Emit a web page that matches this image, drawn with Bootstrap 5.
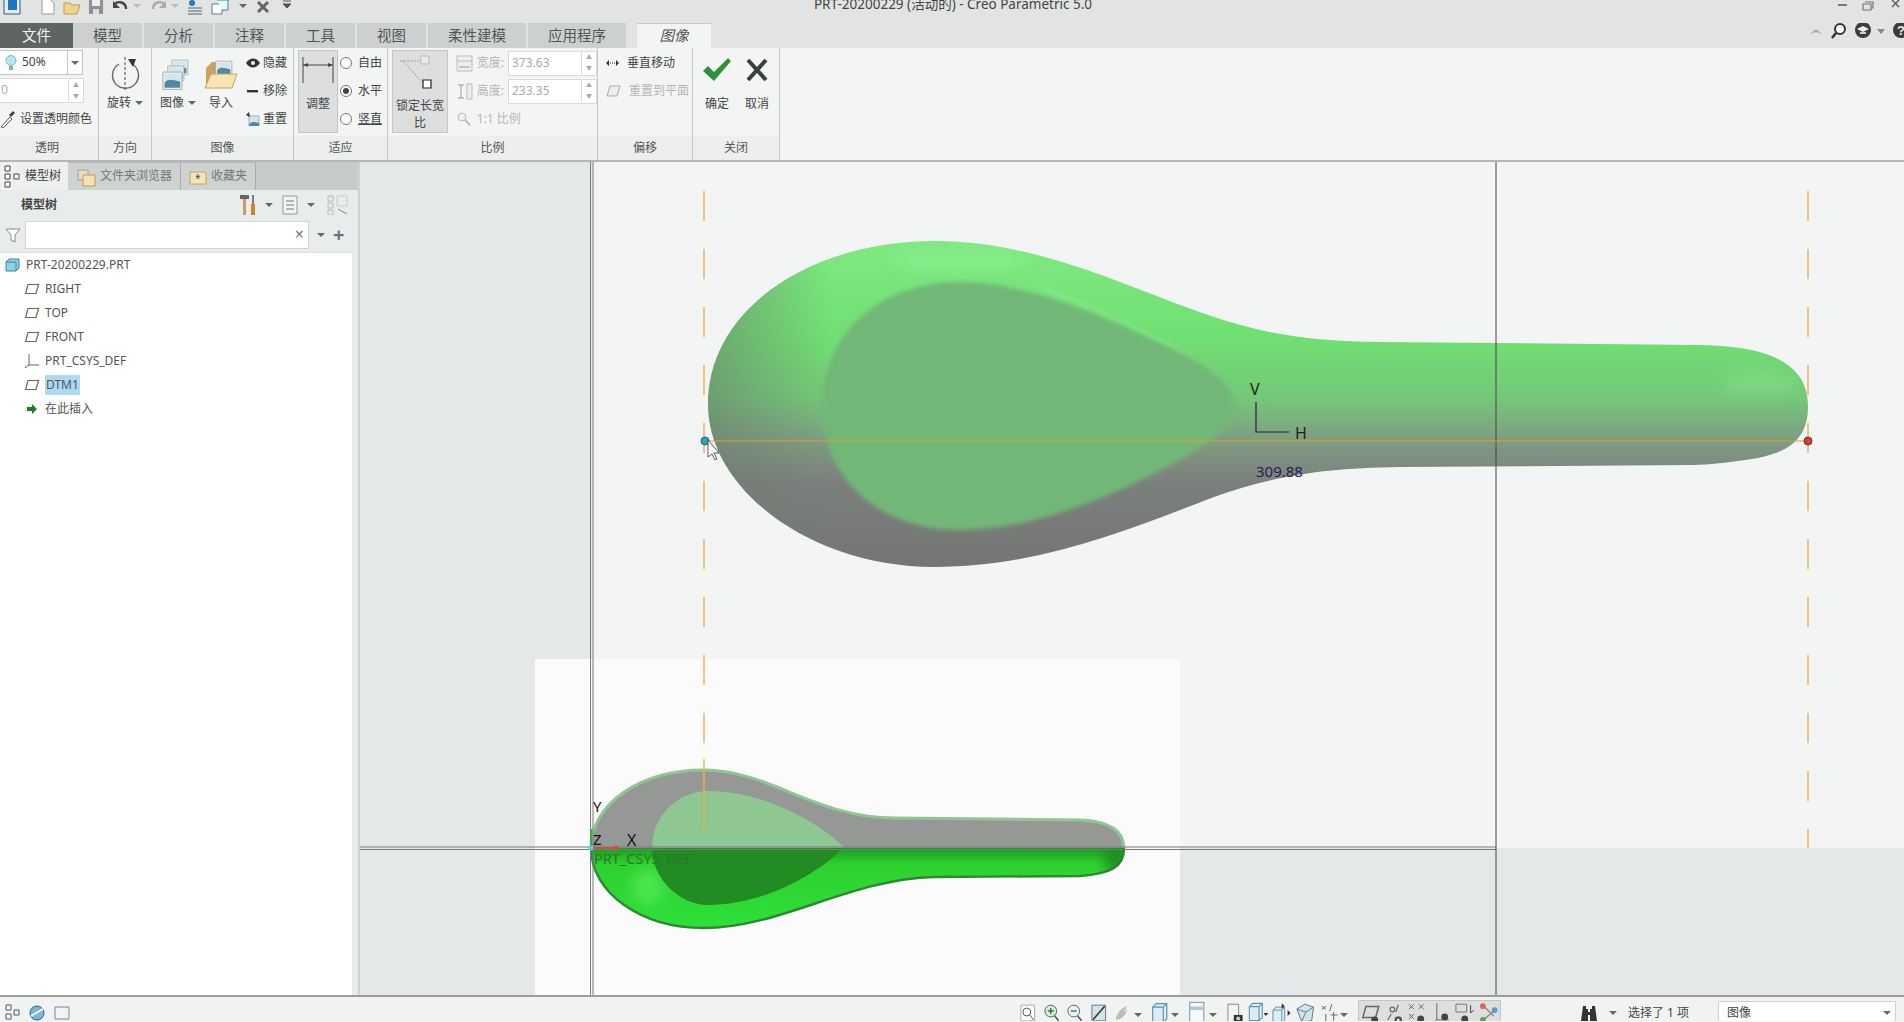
<!DOCTYPE html>
<html lang="zh-CN">
<head>
  <meta charset="UTF-8">
  <meta name="viewport" content="width=device-width, initial-scale=1">
  <title>PRT-20200229 (活动的) - Creo Parametric 5.0</title>
  <link href="https://cdn.jsdelivr.net/npm/bootstrap@5.3.0/dist/css/bootstrap.min.css" rel="stylesheet">
  <style>
    html, body { height: 100%; overflow: hidden; }
    body { font-family: "Noto Sans", "Noto Sans CJK SC", sans-serif; font-size: 12px; color: #444; background: #f3f5f4; line-height: 1.2; }
    .app-shell { width: 1904px; height: 1022px; overflow: hidden; }

    /* title bar */
    .title-bar { height: 23px; background: #e1e4e2; overflow: hidden; }
    .quick-tools { padding-left: 3px; height: 15px; }
    .quick-tools svg { display: block; margin-top: -7px; flex: none; }
    .q-new { margin-left: 16px; } .q-next { margin-left: 6px; } .q-car { margin-left: 1px; } .q-list { margin-left: 4px; }
    .q-win { margin-left: 7px; } .q-end { margin-left: 8px; }
    .title-text { left: 0; right: 0; top: -4px; text-align: center; font-size: 13.5px; color: #444; padding-left: 2px; }
    .win-btns { right: 0; top: 0; }

    /* tabs */
    .tab-bar { height: 25px; background: #e1e4e2; }
    .rtab { height: 25px; background: #ccd1d0; border-right: 2px solid #dfe2e1; font-size: 14.5px; color: #555; }
    .rtab-file { width: 73px; background: #5f6562; color: #f2f2f2; border: 0; }
    .rtab-m { width: 71px; }
    .rtab-w { width: 100px; }
    .rtab-active { width: 74px; margin-left: 9px; background: #f3f5f4; border: 0; border-top: 1px solid #c4c8c6; font-style: italic; }
    .help-icons { right: 0; top: 0; }

    /* ribbon */
    .ribbon { height: 114px; background: #f3f5f4; border-bottom: 2px solid #b3b6b5; }
    .rib-group { border-right: 1px solid #c6c9c8; }
    .rg-body { height: 88px; }
    .rg-label { height: 24px; background: #ecefee; font-size: 12px; color: #555; }
    .w-alpha { width: 99px; } .w-dir { width: 53px; } .w-img { width: 142px; } .w-fit { width: 94px; }
    .w-scale { width: 210px; } .w-off { width: 95px; } .w-close { width: 87px; }

    .combo-box { width: 83px; height: 25px; margin-top: 2px; background: #fff; border: 1px solid #c3c6c5; border-left: 0; padding-left: 4px; }
    .combo-arrow { width: 15px; border-left: 1px solid #c3c6c5; }
    .caret-d { display: inline-block; width: 0; height: 0; border-left: 4px solid transparent; border-right: 4px solid transparent; border-top: 4px solid #666; }
    .spin-box { background: #fff; border: 1px solid #dadcdb; height: 25px; color: #aaa; }
    .spin-arrows { width: 15px; border-left: 1px solid #dadcdb; font-size: 6px; line-height: 11px; text-align: center; color: #aaa; }
    .alpha-spin { width: 84px; margin-top: 3px; border-left: 0; padding-left: 1px; }
    .alpha-pick { margin-top: 2px; }
    .rib-line { height: 28px; white-space: nowrap; }
    .rib-stack { padding-top: 1px; }
    .rib-col { font-size: 12px; }
    .icon-gap { gap: 3px; }
    .press-btn { background: #dcdfde; border: 1px solid #c3c6c5; height: 83px; margin-top: 2px; }
    .fit-btn { width: 40px; margin-left: 4px; }
    .fit-cap { margin-top: 12px; }
    .lock-btn { width: 56px; margin-left: 4px; text-align: center; line-height: 17px; }
    .radio-stack { margin-left: 2px; }
    .radio-line { gap: 6px; }
    .radio-dot { width: 12px; height: 12px; border: 1px solid #777; border-radius: 50%; background: #fff; display: inline-block; position: relative; }
    .radio-on::after { content: ""; position: absolute; left: 2px; top: 2px; width: 6px; height: 6px; border-radius: 50%; background: #444; }
    .muted-txt { color: #b4b7b6; }
    .scale-spin { width: 89px; padding-left: 3px; font-size: 12px; }
    .close-col { width: 40px; }
    .close-cap { margin-top: 13px; }

    /* side panel */
    .main-area { height: 833px; }
    .side-panel { width: 360px; background: #e9ecec; border-right: 2px solid #cfd2d2; }
    .ptabs { height: 28px; background: #c6cbca; }
    .ptab { height: 28px; border-right: 1px solid #a9adac; border-top: 1px solid #b5b9b8; color: #777; gap: 4px; padding-left: 8px; background: #ced2d1; }
    .ptab-on { width: 68px; background: #eef0f0; color: #444; border: 0; padding-left: 3px; }
    .ptab-2 { width: 113px; }
    .ptab-3 { width: 75px; }
    .ptabs-fill { background: #c6cbca; }
    .tree-tools { height: 30px; padding-left: 21px; padding-right: 9px; }
    .filter-row { height: 29px; padding-left: 5px; }
    .filter-input { width: 284px; height: 28px; margin-left: 4px; background: #fff; border: 1px solid #d2d5d4; font-size: 16px; }
    .model-tree { width: 352px; height: 743px; margin-top: 3px; background: #fff; border-top: 1px solid #dfe2e1; padding-top: 0; }
    .tree-row { height: 24px; font-size: 12px; color: #555; }
    .tree-root { padding-left: 5px; gap: 6px; }
    .tree-child { padding-left: 24px; gap: 5px; }
    .tree-sel { background: #aed9f2; padding: 3px 1px; }

    /* canvas */
    .view-svg { display: block; }
    .view-svg text { font-family: "Noto Sans", sans-serif; }

    /* status bar */
    .status-bar { height: 26px; background: #f1f3f2; border-top: 2px solid #9a9d9c; padding-top: 8px; overflow: hidden; }
    .s-icon { width: 23.5px; height: 24px; flex: none; }
    .s-caret { width: 14px; flex: none; }
    .s-pressed { background: #dcdfde; border: 1px solid #c3c6c5; }
    .status-left { width: 1016px; padding-left: 4px; gap: 4px; }
    .status-right { padding-right: 8px; }
    .status-combo { width: 178px; height: 24px; background: #fff; border: 1px solid #cfd2d1; margin-left: 29px; padding-left: 8px; }
    .binoc-gap { margin-right: 10px; }
    .binoc-caret { margin-right: 11px; }
  </style>
</head>
<body>
<svg width="0" height="0" class="position-absolute">
  <defs>
    <symbol id="plane" viewBox="0 0 16 12"><path d="M4 1.5h10.5L12 10.5H1.5z" fill="none" stroke="#6b6655" stroke-width="1.2"/></symbol>
    <symbol id="page" viewBox="0 0 18 20"><path d="M3 1h12v18H3z" fill="#f6fafc" stroke="#8ea0aa"/><path d="M3 6h12" stroke="#a8c8dc" stroke-width="3"/></symbol>
    <symbol id="box" viewBox="0 0 18 20"><path d="M3 5l3-3h9v13l-3 3H3z" fill="#dcecf4" stroke="#5c93b0"/><path d="M3 5h9v13M12 5l3-3" fill="none" stroke="#5c93b0"/></symbol>
    <symbol id="sel" viewBox="0 0 18 20"><circle cx="7" cy="7" r="2" fill="none" stroke="#666"/><path d="M3 16l3-5M12 3l-2 6" stroke="#666"/><circle cx="12" cy="16" r="3.2" fill="#555"/><circle cx="12" cy="16" r="1.2" fill="#eee"/></symbol>
    <symbol id="photo" viewBox="0 0 30 26"><path d="M1 5h22v20H1z" fill="#eef2f2" stroke="#9aa5a8"/><path d="M3 7h18v10H3z" fill="#d3e6ec"/><path d="M3 17c5-5 9-3 18-1v7H3z" fill="#4f8aa2"/></symbol>
  </defs>
</svg>

<div class="app-shell d-flex flex-column">

  <!-- Title bar -->
  <div class="title-bar position-relative">
    <div class="quick-tools d-flex align-items-start">
      <svg width="20" height="22" viewBox="0 0 20 22"><path d="M1 1h16v20H1z" fill="#dff0f8" stroke="#456"/><path d="M5 3h9v14H5z" fill="#1e78bd"/></svg>
      <svg class="q-new" width="18" height="22" viewBox="0 0 18 22"><path d="M3 6h8l4 4v11H3z" fill="#fff" stroke="#999"/></svg>
      <svg class="q-next" width="18" height="22" viewBox="0 0 18 22"><path d="M1 10h6l2 2h8l-3 9H1z" fill="#efd28c" stroke="#c09a4a"/></svg>
      <svg class="q-next" width="18" height="22" viewBox="0 0 18 22"><path d="M2 7h14v14H2z" fill="#8d9396"/><path d="M5 7h8v6H5z" fill="#eee"/><path d="M6 16h6v5H6z" fill="#ddd"/></svg>
      <svg class="q-next" width="18" height="22" viewBox="0 0 18 22"><path d="M3 12c4-5 12-3 12 4" fill="none" stroke="#444" stroke-width="2.4"/><path d="M2 8v7h7z" fill="#444"/></svg>
      <svg class="q-car" width="14" height="22" viewBox="0 0 14 22"><path d="M3 11h8l-4 4z" fill="#bbb"/></svg>
      <svg class="q-next" width="18" height="22" viewBox="0 0 18 22"><path d="M15 12c-4-5-12-3-12 4" fill="none" stroke="#aaa" stroke-width="2.4"/><path d="M16 8v7H9z" fill="#aaa"/></svg>
      <svg width="14" height="22" viewBox="0 0 14 22"><path d="M3 11h8l-4 4z" fill="#bbb"/></svg>
      <svg class="q-list" width="18" height="22" viewBox="0 0 18 22"><path d="M2 15h14M2 18h14M2 21h14" stroke="#567"/><circle cx="6" cy="10" r="3" fill="#37a"/></svg>
      <svg class="q-win" width="18" height="22" viewBox="0 0 18 22"><path d="M1 11h10v10H1z" fill="#fff" stroke="#678"/><path d="M6 7h11v10h-6" fill="#dff" stroke="#678"/></svg>
      <svg class="q-win" width="14" height="22" viewBox="0 0 14 22"><path d="M3 11h8l-4 4z" fill="#666"/></svg>
      <svg class="q-list" width="18" height="22" viewBox="0 0 18 22"><path d="M4 9l10 10M14 9L4 19" stroke="#666" stroke-width="3"/></svg>
      <svg class="q-end" width="14" height="22" viewBox="0 0 14 22"><path d="M3 11h8l-4 4zM3 8h8" fill="#555" stroke="#555"/></svg>
    </div>
    <div class="title-text position-absolute">PRT-20200229 (活动的) - Creo Parametric 5.0</div>
    <svg class="win-btns position-absolute" width="70" height="12" viewBox="0 0 70 12"><path d="M4 5h9" stroke="#777" stroke-width="2"/><path d="M31 2h8v6h-2M29 4h8v6h-8z" fill="none" stroke="#777" stroke-width="1.2"/><path d="M58 0l7 7M65 0l-7 7" stroke="#666" stroke-width="1.6"/></svg>
  </div>

  <!-- Ribbon tabs -->
  <div class="tab-bar position-relative d-flex">
    <div class="rtab rtab-file d-flex align-items-center justify-content-center">文件</div>
    <div class="rtab rtab-m d-flex align-items-center justify-content-center">模型</div>
    <div class="rtab rtab-m d-flex align-items-center justify-content-center">分析</div>
    <div class="rtab rtab-m d-flex align-items-center justify-content-center">注释</div>
    <div class="rtab rtab-m d-flex align-items-center justify-content-center">工具</div>
    <div class="rtab rtab-m d-flex align-items-center justify-content-center">视图</div>
    <div class="rtab rtab-w d-flex align-items-center justify-content-center">柔性建模</div>
    <div class="rtab rtab-w d-flex align-items-center justify-content-center">应用程序</div>
    <div class="rtab rtab-active d-flex align-items-center justify-content-center">图像</div>
    <svg class="help-icons position-absolute" width="100" height="25" viewBox="1804 23 100 25">
      <path d="M1810 34l6-5 6 5-6-2z" fill="#aaa"/>
      <circle cx="1840" cy="29" r="5" fill="#fff" stroke="#333" stroke-width="2"/><path d="M1836 33l-4 5" stroke="#333" stroke-width="2.6"/>
      <circle cx="1863" cy="30" r="8" fill="#3a3d3c"/><path d="M1857 29l6-3 6 3-6 3z" fill="#eee"/><path d="M1860 32h6v2h-6z" fill="#ccc"/>
      <path d="M1877 29h8l-4 5z" fill="#888"/>
      <circle cx="1901" cy="30" r="8" fill="#3a3d3c"/>
      <text x="1897" y="35" font-size="13" font-weight="700" fill="#eee" font-family="Liberation Sans, sans-serif">?</text>
    </svg>
  </div>

  <!-- Ribbon -->
  <div class="ribbon d-flex">

    <div class="rib-group w-alpha d-flex flex-column">
      <div class="rg-body">
        <div class="combo-box d-flex align-items-center justify-content-between">
          <span class="d-flex align-items-center gap-1">
            <svg width="14" height="18" viewBox="0 0 14 18"><circle cx="7" cy="6.5" r="5" fill="#b9e6f4" stroke="#6fb8d0"/><path d="M5 12h4v4H5z" fill="#9aa"/></svg>50%
          </span>
          <span class="combo-arrow h-100 d-flex align-items-center justify-content-center"><span class="caret-d"></span></span>
        </div>
        <div class="spin-box alpha-spin d-flex justify-content-between align-items-center"><span>0</span><span class="spin-arrows">▲<br>▼</span></div>
        <div class="rib-line alpha-pick d-flex align-items-center gap-1">
          <svg width="16" height="18" viewBox="0 0 16 18"><path d="M1 17l9-10 2 2-9 9z" fill="#fff" stroke="#555"/><path d="M9 5l4-4 2 2-4 4z" fill="#444"/></svg>设置透明颜色
        </div>
      </div>
      <div class="rg-label d-flex align-items-center justify-content-center pe-1">透明</div>
    </div>

    <div class="rib-group w-dir d-flex flex-column">
      <div class="rg-body d-flex flex-column align-items-center">
        <svg class="mt-2" width="32" height="36" viewBox="0 0 32 36"><path d="M16 1v34" stroke="#444" stroke-dasharray="3 2"/><path d="M10 8a13 13 0 1 0 13 0" fill="none" stroke="#666" stroke-width="1.4"/><path d="M19 3l8 0-3 8z" fill="#333"/></svg>
        <div class="mt-1 d-flex align-items-center gap-1">旋转 <span class="caret-d"></span></div>
      </div>
      <div class="rg-label d-flex align-items-center justify-content-center">方向</div>
    </div>

    <div class="rib-group w-img d-flex flex-column">
      <div class="rg-body d-flex">
        <div class="rib-col d-flex flex-column align-items-center ms-2">
          <svg class="mt-2" width="34" height="36" viewBox="0 0 34 36"><use href="#photo" x="10" y="0" width="22" height="20"/><use href="#photo" x="6" y="6" width="22" height="20"/><use href="#photo" x="1" y="11" width="26" height="24"/></svg>
          <div class="mt-1 d-flex align-items-center gap-1">图像 <span class="caret-d"></span></div>
        </div>
        <div class="rib-col d-flex flex-column align-items-center ms-2">
          <svg class="mt-2" width="34" height="36" viewBox="0 0 34 36"><path d="M2 12l6-6h6v26H2z" fill="#c9a260"/><use href="#photo" x="11" y="1" width="22" height="20"/><path d="M7 18h26l-5 14H1z" fill="#f8e3b4" stroke="#c9a260"/></svg>
          <div class="mt-1">导入</div>
        </div>
        <div class="rib-col rib-stack d-flex flex-column ms-2">
          <div class="rib-line d-flex align-items-center icon-gap"><svg width="14" height="10" viewBox="0 0 14 10"><path d="M0 5c4-6 10-6 14 0-4 6-10 6-14 0z" fill="#333"/><circle cx="7" cy="5" r="2" fill="#eee"/></svg>隐藏</div>
          <div class="rib-line d-flex align-items-center icon-gap"><svg width="14" height="10" viewBox="0 0 14 10"><path d="M1 4h11v2.4H1z" fill="#333"/></svg>移除</div>
          <div class="rib-line d-flex align-items-center icon-gap"><svg width="14" height="14" viewBox="0 0 14 14"><path d="M3 4h10v10H3z" fill="#d3e6ec" stroke="#888" stroke-width=".6"/><path d="M3 12c4-3 6-2 10-1v3H3z" fill="#4f8aa2"/><path d="M0 3l3-3 1 5z" fill="#333"/></svg>重置</div>
        </div>
      </div>
      <div class="rg-label d-flex align-items-center justify-content-center">图像</div>
    </div>

    <div class="rib-group w-fit d-flex flex-column">
      <div class="rg-body d-flex">
        <div class="press-btn fit-btn d-flex flex-column align-items-center">
          <svg class="mt-1" width="34" height="30" viewBox="0 0 34 30"><path d="M2 2v26M32 2v26" stroke="#444"/><path d="M2 10h30" stroke="#444"/><path d="M2 10l5-2v4zM32 10l-5-2v4z" fill="#444"/></svg>
          <div class="fit-cap">调整</div>
        </div>
        <div class="radio-stack rib-stack d-flex flex-column">
          <div class="rib-line radio-line d-flex align-items-center"><span class="radio-dot"></span>自由</div>
          <div class="rib-line radio-line d-flex align-items-center"><span class="radio-dot radio-on"></span>水平</div>
          <div class="rib-line radio-line d-flex align-items-center"><span class="radio-dot"></span><u>竖直</u></div>
        </div>
      </div>
      <div class="rg-label d-flex align-items-center justify-content-center">适应</div>
    </div>

    <div class="rib-group w-scale d-flex flex-column">
      <div class="rg-body d-flex">
        <div class="press-btn lock-btn">
          <svg class="d-block mx-auto mt-1" width="46" height="38" viewBox="0 0 46 38"><path d="M3 6h21M6 6l22 24" stroke="#999" stroke-dasharray="2 1.5"/><path d="M24 1h8v8h-8z" fill="#e8eaea" stroke="#bbb"/><path d="M26 25h8v8h-8z" fill="#fff" stroke="#222" stroke-width="1.2"/></svg>
          <div class="mt-1">锁定长宽比</div>
        </div>
        <div class="ms-2 rib-stack muted-txt d-flex flex-column">
          <div class="rib-line d-flex align-items-center gap-1">
            <svg width="17" height="17" viewBox="0 0 17 17"><path d="M1 1h15v15H1z" fill="#eee" stroke="#bbb"/><path d="M1 6h15" stroke="#bbb"/><path d="M3 12h11" stroke="#999"/></svg>宽度:
            <span class="spin-box scale-spin d-flex justify-content-between align-items-center">373.63<span class="spin-arrows">▲<br>▼</span></span>
          </div>
          <div class="rib-line d-flex align-items-center gap-1">
            <svg width="17" height="17" viewBox="0 0 17 17"><path d="M11 1h5v15h-5z" fill="#eee" stroke="#bbb"/><path d="M5 2v13M2 2h6M2 15h6" stroke="#999"/></svg>高度:
            <span class="spin-box scale-spin d-flex justify-content-between align-items-center">233.35<span class="spin-arrows">▲<br>▼</span></span>
          </div>
          <div class="rib-line d-flex align-items-center gap-1">
            <svg width="17" height="17" viewBox="0 0 17 17"><circle cx="6" cy="6" r="4" fill="#eee" stroke="#bbb"/><path d="M9 9l5 5" stroke="#bbb" stroke-width="2"/></svg>1:1 比例
          </div>
        </div>
      </div>
      <div class="rg-label d-flex align-items-center justify-content-center">比例</div>
    </div>

    <div class="rib-group w-off d-flex flex-column">
      <div class="rg-body rib-stack ps-2">
        <div class="rib-line d-flex align-items-center gap-2">
          <svg width="13" height="8" viewBox="0 0 13 8"><path d="M0 4l3-3v6zM13 4l-3-3v6z" fill="#333"/><path d="M4 4h5" stroke="#333" stroke-dasharray="1 1"/></svg>垂直移动
        </div>
        <div class="rib-line d-flex align-items-center gap-2 muted-txt">
          <svg width="15" height="12" viewBox="0 0 15 12"><path d="M4 1h10l-3 10H1z" fill="#eee" stroke="#aaa"/></svg>重置到平面
        </div>
      </div>
      <div class="rg-label d-flex align-items-center justify-content-center">偏移</div>
    </div>

    <div class="rib-group w-close d-flex flex-column">
      <div class="rg-body d-flex ps-1">
        <div class="close-col d-flex flex-column align-items-center">
          <svg class="mt-2" width="30" height="28" viewBox="0 0 30 28"><path d="M1 15l5-5 6 6L26 2l3 3-17 20z" fill="#2f8f43"/><path d="M12 16L26 2l3 3" fill="none" stroke="#a6d66a"/></svg>
          <div class="close-cap">确定</div>
        </div>
        <div class="close-col d-flex flex-column align-items-center">
          <svg class="mt-2" width="24" height="28" viewBox="0 0 24 28"><path d="M3 4l18 20M21 4L3 24" stroke="#3b3f3e" stroke-width="4"/></svg>
          <div class="close-cap">取消</div>
        </div>
      </div>
      <div class="rg-label d-flex align-items-center justify-content-center">关闭</div>
    </div>
  </div>

  <!-- Main -->
  <div class="main-area d-flex">
    <div class="side-panel d-flex flex-column flex-shrink-0">
      <div class="ptabs d-flex">
        <div class="ptab ptab-on d-flex align-items-center">
          <svg width="18" height="24" viewBox="0 0 18 24"><path d="M2 2h5v5H2zM2 10h5v5H2zM2 18h5v5H2zM11 10h5v5h-5z" fill="#fff" stroke="#444"/></svg>模型树
        </div>
        <div class="ptab ptab-2 d-flex align-items-center">
          <svg width="20" height="22" viewBox="0 0 20 22"><path d="M2 4h10v10H2z" fill="#e8dcc0" stroke="#a99"/><path d="M7 9h12v11H7z" fill="#f4e2ae" stroke="#b99c5c"/></svg>文件夹浏览器
        </div>
        <div class="ptab ptab-3 d-flex align-items-center">
          <svg width="18" height="16" viewBox="0 0 18 16"><path d="M1 3h16v12H1z" fill="#f5e5b5" stroke="#bba36a"/><text x="6" y="13" font-size="10" fill="#256">*</text></svg>收藏夹
        </div>
        <div class="ptabs-fill flex-grow-1"></div>
      </div>
      <div class="tree-tools d-flex align-items-center justify-content-between">
        <strong class="fw-bold">模型树</strong>
        <span class="d-flex align-items-center gap-2">
          <svg width="18" height="22" viewBox="0 0 18 22"><path d="M1 1h9v4H1z" fill="#666"/><path d="M4 5h3v16H4z" fill="#c99a5a"/><path d="M14 1v9" stroke="#555" stroke-width="1.5"/><path d="M12 10h4v11h-4z" fill="#c8842e"/></svg>
          <span class="caret-d"></span>
          <svg width="18" height="20" viewBox="0 0 18 20"><path d="M2 1h14v18H2z" fill="#f2f5f5" stroke="#999"/><path d="M5 6h8M5 10h8M5 14h8" stroke="#777"/></svg>
          <span class="caret-d"></span>
          <svg class="ms-1" width="22" height="20" viewBox="0 0 22 20"><path d="M1 1h5v5H1zM1 8h5v5H1zM1 15h5v5H1z" fill="none" stroke="#bbb"/><path d="M10 1h10v10H10z" fill="none" stroke="#ccc"/><path d="M11 14l9 5" stroke="#888"/></svg>
        </span>
      </div>
      <div class="filter-row d-flex align-items-center">
        <svg width="16" height="16" viewBox="0 0 16 16"><path d="M1 2h14l-5 6v7l-4-2V8z" fill="#fff" stroke="#888"/></svg>
        <div class="filter-input d-flex align-items-center justify-content-end pe-1 text-secondary">×</div>
        <span class="caret-d ms-2"></span>
        <span class="ms-2 fs-5 fw-bold text-secondary">+</span>
      </div>
      <div class="model-tree">
        <div class="tree-row tree-root d-flex align-items-center">
          <svg width="15" height="14" viewBox="0 0 15 14"><path d="M1 4l3-3h10v9l-3 3H1z" fill="#8ed2e8" stroke="#3b87a5"/><path d="M1 4h10v9" fill="none" stroke="#3b87a5"/></svg>PRT-20200229.PRT
        </div>
        <div class="tree-row tree-child d-flex align-items-center"><svg width="16" height="12"><use href="#plane"/></svg>RIGHT</div>
        <div class="tree-row tree-child d-flex align-items-center"><svg width="16" height="12"><use href="#plane"/></svg>TOP</div>
        <div class="tree-row tree-child d-flex align-items-center"><svg width="16" height="12"><use href="#plane"/></svg>FRONT</div>
        <div class="tree-row tree-child d-flex align-items-center"><svg width="16" height="16" viewBox="0 0 16 16"><path d="M5 1v11l10 0M5 12l-4 3" fill="none" stroke="#6b6655"/></svg>PRT_CSYS_DEF</div>
        <div class="tree-row tree-child d-flex align-items-center"><svg width="16" height="12"><use href="#plane"/></svg><span class="tree-sel">DTM1</span></div>
        <div class="tree-row tree-child d-flex align-items-center"><svg width="16" height="12" viewBox="0 0 16 12"><path d="M3 4h5V1l5 5-5 5V8H3z" fill="#1c7a2a"/></svg>在此插入</div>
      </div>
    </div>

    <!-- Graphics window -->
    <svg class="view-svg flex-grow-1" width="1544" height="833" viewBox="360 163 1544 833">
      <defs>
        <linearGradient id="bigFill" gradientUnits="userSpaceOnUse" x1="0" y1="242" x2="0" y2="568">
          <stop offset="0" stop-color="#7fe982"/><stop offset=".3" stop-color="#70df72"/><stop offset=".48" stop-color="#74c878"/>
          <stop offset=".62" stop-color="#7f9a82"/><stop offset=".74" stop-color="#7c807d"/><stop offset="1" stop-color="#747674"/>
        </linearGradient>
        <linearGradient id="bigLeft" gradientUnits="userSpaceOnUse" x1="708" y1="0" x2="830" y2="0">
          <stop offset="0" stop-color="#6a7a6c" stop-opacity=".55"/><stop offset="1" stop-color="#6a7a6c" stop-opacity="0"/>
        </linearGradient>
        <linearGradient id="smallLow" gradientUnits="userSpaceOnUse" x1="0" y1="849" x2="0" y2="929">
          <stop offset="0" stop-color="#1d9a22"/><stop offset=".2" stop-color="#2ed12f"/><stop offset="1" stop-color="#2ee03a"/>
        </linearGradient>
        <filter id="soft" x="-5%" y="-5%" width="110%" height="110%"><feGaussianBlur stdDeviation="2"/></filter>
        <filter id="softer" x="-50%" y="-50%" width="200%" height="200%"><feGaussianBlur stdDeviation="7"/></filter>
        <path id="bigOutline" d="M708 405C708 310 810 242 935 242C1040 242 1130 290 1214 318C1270 336 1310 342 1380 343L1700 346C1770 347 1808 365 1808 407C1808 440 1790 455 1745 461C1720 465 1700 466 1690 466L1400 468C1320 469 1270 478 1214 498C1130 530 1040 568 935 568C810 568 708 490 708 405Z"/>
        <path id="smallOutline" d="M591 849C591 805 640 771 704 771C770 771 815 819 895 819L1080 821C1110 822 1124 832 1124 850C1124 868 1110 875 1080 877L934 878C850 880 780 929 704 929C640 929 591 893 591 849Z"/>
        <path id="smallInner" d="M652 849C652 815 680 792 708 792C760 792 815 820 844 848C815 878 760 906 708 906C680 906 652 880 652 849Z"/>
        <clipPath id="clipBig"><use href="#bigOutline"/></clipPath>
        <clipPath id="clipSmall"><use href="#smallOutline"/></clipPath>
        <clipPath id="clipUp"><rect x="360" y="700" width="1000" height="149"/></clipPath>
        <clipPath id="clipDown"><rect x="360" y="849" width="1000" height="100"/></clipPath>
      </defs>

      <!-- backdrop -->
      <rect x="360" y="163" width="1544" height="833" fill="#e5e8e8"/>
      <rect x="592" y="163" width="1312" height="686" fill="#f3f5f5"/>
      <rect x="535" y="660" width="645" height="336" fill="#fafbfa"/>
      <rect x="1180" y="660" width="316" height="189" fill="#f3f5f5"/>

      <!-- construction dashes -->
      <g stroke="#eeb04a" stroke-width="1.4" stroke-dasharray="30 28">
        <path d="M704 192V849"/><path d="M1808 192V849"/>
      </g>

      <!-- big spoon -->
      <use href="#bigOutline" fill="url(#bigFill)"/>
      <g clip-path="url(#clipBig)">
        <rect x="700" y="240" width="140" height="330" fill="url(#bigLeft)"/>
        <ellipse cx="1760" cy="385" rx="40" ry="12" fill="#8fe995" opacity=".35" filter="url(#softer)"/>
        <ellipse cx="960" cy="262" rx="70" ry="12" fill="#8df090" opacity=".6" filter="url(#softer)"/>
      </g>
      <path d="M1040 288C1110 315 1175 345 1215 378" fill="none" stroke="#8ceb90" stroke-width="3" opacity=".7" filter="url(#soft)"/>
      <path d="M822 407C822 335 880 283 959 283C1040 283 1130 330 1190 358C1220 374 1234 392 1234 407C1234 425 1215 440 1190 455C1130 490 1040 531 959 531C880 531 822 480 822 407Z" fill="#72b777" filter="url(#soft)"/>

      <!-- small spoon: upper half seen through, lower half solid -->
      <g clip-path="url(#clipUp)">
        <use href="#smallOutline" fill="#969896" stroke="#8fc794" stroke-width="3"/>
        <use href="#smallInner" fill="#8fc792"/>
        <path d="M704 760V830" stroke="#eeb04a" stroke-width="1.4"/>
      </g>
      <g clip-path="url(#clipDown)">
        <use href="#smallOutline" fill="url(#smallLow)" stroke="#2b8a2e" stroke-width="2.4"/>
        <g clip-path="url(#clipSmall)">
          <ellipse cx="648" cy="888" rx="16" ry="18" fill="#58ec5c" opacity=".7" filter="url(#softer)"/>
          <path d="M1106 849h18v26h-18z" fill="#167a1e" opacity=".8" filter="url(#softer)"/>
        </g>
        <use href="#smallInner" fill="#228b22"/>
      </g>

      <!-- datum lines -->
      <path d="M360 848H1496M360 850.5H1496" stroke="#77797a" stroke-width="1"/>
      <path d="M590.5 163V996M593 163V996" stroke="#77797a" stroke-width="1"/>
      <path d="M1496 163V996" stroke="#444" stroke-width="1"/>

      <!-- stretch handle line -->
      <path d="M705 442H1808" stroke="#e0a030" stroke-width="1.2"/>
      <circle cx="705" cy="442" r="4" fill="#2f9fb8" stroke="#1d6f88"/>
      <circle cx="1808" cy="442" r="4" fill="#c8433a" stroke="#8a2a25"/>
      <path d="M708 441v17l4-3 3 6 2-1-3-6h5z" fill="#fff" stroke="#333" stroke-width=".8"/>

      <!-- local axes -->
      <path d="M1256 403V433H1289" fill="none" stroke="#222238" stroke-width="1.2"/>
      <text x="1250" y="396" font-size="16" fill="#222">V</text>
      <text x="1295" y="440" font-size="16" fill="#222">H</text>
      <text x="1256" y="478" font-size="15" fill="#2c1a55">309.88</text>

      <!-- csys labels -->
      <path d="M591 849V830" stroke="#3cae4a" stroke-width="2"/>
      <path d="M591 849H616" stroke="#d0503c" stroke-width="2"/>
      <circle cx="591" cy="849" r="2.5" fill="#3fd8e4"/>
      <circle cx="616" cy="849" r="2.5" fill="#d0503c"/>
      <text x="593" y="813" font-size="15" fill="#111">Y</text>
      <text x="593" y="846" font-size="15" fill="#111">Z</text>
      <text x="627" y="847" font-size="16" fill="#111">X</text>
      <text x="594" y="865" font-size="14.5" fill="#2a7a2a">PRT_CSYS_DEF</text>
    </svg>
  </div>

  <!-- Status bar -->
  <div class="status-bar d-flex align-items-center">
    <div class="status-left d-flex align-items-center">
      <svg width="20" height="20" viewBox="0 0 20 20"><path d="M2 2h5v5H2zM2 11h5v5H2zM10 7h5v5h-5z" fill="#fff" stroke="#456"/></svg>
      <svg width="18" height="18" viewBox="0 0 18 18"><circle cx="9" cy="9" r="7" fill="#7ab8d8" stroke="#27628c"/><path d="M3 12l12-7" stroke="#fff" stroke-width="2"/></svg>
      <svg class="ms-1" width="16" height="16" viewBox="0 0 16 16"><path d="M1 2h14v12H1z" fill="#eef4f8" stroke="#789"/></svg>
    </div>
    <div class="d-flex align-items-center">
      <svg class="s-icon" viewBox="0 0 24 24"><path d="M5 4h14v16H5z" fill="#fff" stroke="#aaa"/><circle cx="11" cy="11" r="4" fill="none" stroke="#555"/><path d="M14 14l4 5" stroke="#555"/></svg>
      <svg class="s-icon" viewBox="0 0 24 24"><circle cx="11" cy="10" r="6" fill="#d5ecd8" stroke="#567"/><path d="M8 10h6M11 7v6" stroke="#2a7a3a" stroke-width="1.4"/><path d="M15 15l4 5" stroke="#555" stroke-width="1.6"/></svg>
      <svg class="s-icon" viewBox="0 0 24 24"><circle cx="11" cy="10" r="6" fill="#eef4f4" stroke="#567"/><path d="M8 10h6" stroke="#2a6a8a" stroke-width="1.4"/><path d="M15 15l4 5" stroke="#555" stroke-width="1.6"/></svg>
      <svg class="s-icon" viewBox="0 0 24 24"><path d="M5 4h14v16H5z" fill="#cfe4ec" stroke="#678"/><path d="M6 19L18 5" stroke="#333" stroke-width="1.6"/></svg>
      <svg class="s-icon" viewBox="0 0 24 24"><path d="M6 19c0-6 6-13 11-14 2 5-3 14-11 14z" fill="#b9bebd"/><path d="M13 10c2 0 3-2 4-5 1 3-1 6-4 5z" fill="#f4f6f6"/></svg>
      <span class="s-caret"><span class="caret-d"></span></span>
      <svg class="s-icon" viewBox="0 0 24 24"><use href="#box" width="24" height="24"/></svg>
      <span class="s-caret"><span class="caret-d"></span></span>
      <svg class="s-icon" viewBox="0 0 24 24"><use href="#page" width="24" height="24"/></svg>
      <span class="s-caret"><span class="caret-d"></span></span>
      <svg class="s-icon" viewBox="0 0 24 24"><path d="M5 3h11v18H5z" fill="#f2f5f5" stroke="#888"/><path d="M11 14h9v7h-9z" fill="#333"/><circle cx="15.500" cy="17.500" r="2" fill="#ccc"/></svg>
      <svg class="s-icon" viewBox="0 0 24 24"><use href="#box" width="20" height="22"/><path d="M18 12h5l-3 3z" fill="#333"/></svg>
      <svg class="s-icon" viewBox="0 0 24 24"><use href="#box" width="18" height="20" y="4"/><path d="M12 2v6l3-3zM21 12l-3 3v-6z" fill="#333"/></svg>
      <svg class="s-icon" viewBox="0 0 24 24"><path d="M4 8l8-5 9 3-2 14-10 1z" fill="#cfe4ec" stroke="#678"/><path d="M4 8l9 3 8-5M13 11l-4 10" stroke="#678" fill="none"/></svg>
      <svg class="s-icon" viewBox="0 0 24 24"><text x="4" y="10" font-size="10" fill="#555">×</text><path d="M15 3l-2 7M9 13v8M14 14h7M17 11v9" stroke="#666"/></svg>
      <span class="s-caret"><span class="caret-d"></span></span>
      <span class="d-flex s-pressed ms-1">
        <svg class="s-icon" viewBox="0 0 24 24"><use href="#plane" x="2" y="3" width="20" height="16"/><circle cx="16" cy="19" r="3.500" fill="#444"/></svg>
        <svg class="s-icon" viewBox="0 0 24 24"><use href="#sel" width="24" height="24"/></svg>
        <svg class="s-icon" viewBox="0 0 24 24"><path d="M3 3l5 5M8 3L3 8M13 3l5 5M18 3l-5 5M3 13l5 5M8 13l-5 5" stroke="#666"/><circle cx="15" cy="18" r="3.500" fill="#444"/></svg>
        <svg class="s-icon" viewBox="0 0 24 24"><path d="M7 2v17h12M7 19l-4 3" fill="none" stroke="#666"/><circle cx="15" cy="16" r="3.500" fill="#444"/></svg>
        <svg class="s-icon" viewBox="0 0 24 24"><path d="M3 3h11v8H3z" fill="none" stroke="#777"/><path d="M18 4v8l3-3" stroke="#444" fill="none"/><circle cx="12" cy="18" r="3.500" fill="#444"/></svg>
        <svg class="s-icon" viewBox="0 0 24 24"><path d="M5 3l12 12M20 8L5 20" stroke="#888" stroke-width="1.4"/><circle cx="6" cy="5" r="3" fill="#d06a5a"/><circle cx="18" cy="9" r="3" fill="#55a0c8"/><circle cx="6" cy="19" r="3" fill="#59a45a"/></svg>
      </span>
    </div>
    <div class="status-right d-flex align-items-center ms-auto flex-shrink-0">
      <svg class="binoc-gap" width="20" height="20" viewBox="0 0 20 20"><path d="M4 3h3v3h2v3h2V6h2V3h3l2 15h-7v-6H9v6H2z" fill="#333"/></svg>
      <span class="caret-d binoc-caret"></span>
      <span>选择了 1 项</span>
      <div class="status-combo d-flex align-items-center justify-content-between">图像
        <span class="me-1 caret-d"></span>
      </div>
    </div>
  </div>
</div>

<script src="https://cdn.jsdelivr.net/npm/bootstrap@5.3.0/dist/js/bootstrap.bundle.min.js"></script>
</body>
</html>
